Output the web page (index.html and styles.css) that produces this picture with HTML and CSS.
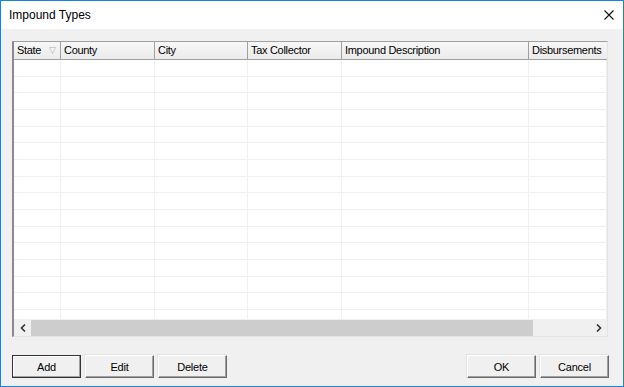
FILE: index.html
```html
<!DOCTYPE html>
<html lang="en">
<head>
    <meta charset="UTF-8">
    <title>Impound Types</title>
    <link rel="stylesheet" href="styles.css">
</head>
<body>
    <div class="window">
        <div class="titlebar">
            <span class="title">Impound Types</span>
            <svg class="close" width="10" height="10" viewBox="0 0 10 10">
                <path d="M0.5 0.5 L9.5 9.5 M9.5 0.5 L0.5 9.5" stroke="#111" stroke-width="1.1" fill="none"/>
            </svg>
        </div>
        <div class="content">
            <div class="grid">
                <div class="grid-head cols">
                    <div class="hcell">State <span class="sort">&#9661;</span></div>
                    <div class="hcell">County</div>
                    <div class="hcell">City</div>
                    <div class="hcell">Tax Collector</div>
                    <div class="hcell">Impound Description</div>
                    <div class="hcell">Disbursements</div>
                </div>
                <div class="grid-body" id="rows"></div>
                <div class="hscroll">
                    <div class="arrow">
                        <svg width="6" height="8" viewBox="0 0 6 8"><path d="M5 0.5 L1.5 4 L5 7.5" stroke="#333" stroke-width="1.6" fill="none"/></svg>
                    </div>
                    <div class="thumb"></div>
                    <div class="track"></div>
                    <div class="arrow">
                        <svg width="6" height="8" viewBox="0 0 6 8"><path d="M1 0.5 L4.5 4 L1 7.5" stroke="#333" stroke-width="1.6" fill="none"/></svg>
                    </div>
                </div>
            </div>
            <div class="buttons">
                <div class="group">
                    <button class="btn default">Add</button>
                    <button class="btn">Edit</button>
                    <button class="btn">Delete</button>
                </div>
                <div class="group">
                    <button class="btn">OK</button>
                    <button class="btn">Cancel</button>
                </div>
            </div>
        </div>
    </div>

    <script>
        // empty rows of the grid
        const rows = document.getElementById('rows');
        for (let i = 0; i < 16; i++) {
            const row = document.createElement('div');
            row.className = 'row cols';
            for (let c = 0; c < 6; c++) {
                const cell = document.createElement('div');
                cell.className = 'cell';
                row.appendChild(cell);
            }
            rows.appendChild(row);
        }
    </script>
</body>
</html>
```

FILE: styles.css
```css
body {
    margin: 0;
    font-family: "Liberation Sans", Arial, sans-serif;
    font-size: 11px;
    color: #000;
}
.window {
    width: 624px;
    height: 387px;
    box-sizing: border-box;
    border: 1px solid #1883d7;
    background-color: #f0f0f0;
    display: flex;
    flex-direction: column;
    overflow: hidden;
}
.titlebar {
    height: 28px;
    background-color: #fff;
    display: flex;
    align-items: center;
    justify-content: space-between;
    padding: 0 9px 0 8px;
    flex-shrink: 0;
}
.title {
    font-size: 12px;
    color: #000;
}
.close {
    margin-top: -1px;
}
.content {
    padding: 12px 0 0 11px;
    display: flex;
    flex-direction: column;
}
.grid {
    width: 596px;
    height: 296px;
    box-sizing: border-box;
    border-top: 1px solid #a0a0a0;
    border-left: 2px solid #8a8a8a;
    border-right: 1px solid #e3e3e3;
    border-bottom: 1px solid #e3e3e3;
    background-color: #fff;
    display: flex;
    flex-direction: column;
    overflow: hidden;
}
.cols {
    display: grid;
    grid-template-columns: 47px 94px 93px 94px 187px 78px;
}
.grid-head {
    height: 17px;
    background: linear-gradient(#f7f7f7, #ebebeb);
    border-bottom: 1px solid #a0a0a0;
    flex-shrink: 0;
}
.hcell {
    border-right: 1px solid #a0a0a0;
    padding-left: 3px;
    line-height: 17px;
    font-size: 11px;
    letter-spacing: -0.3px;
    white-space: nowrap;
    overflow: hidden;
    position: relative;
}
.hcell:last-child {
    border-right: none;
}
.sort {
    position: absolute;
    right: 4px;
    top: 0;
    color: #b0b0b0;
    font-size: 9px;
}
.grid-body {
    flex: 1;
    overflow: hidden;
}
.row {
    height: 16.67px;
    box-sizing: border-box;
    border-bottom: 1px solid #f0f0f0;
}
.cell {
    border-right: 1px solid #f0f0f0;
}
.hscroll {
    height: 16px;
    display: flex;
    background-color: #f0f0f0;
    flex-shrink: 0;
    border-top: 1px solid #f0f0f0;
}
.arrow {
    width: 17px;
    display: flex;
    align-items: center;
    justify-content: center;
}
.thumb {
    width: 502px;
    background-color: #cdcdcd;
}
.track {
    flex: 1;
}
.buttons {
    display: flex;
    justify-content: space-between;
    width: 597px;
    margin-top: 18px;
}
.group {
    display: flex;
    gap: 4px;
}
.btn {
    width: 69px;
    height: 23px;
    box-sizing: border-box;
    font-family: "Liberation Sans", Arial, sans-serif;
    font-size: 11px;
    letter-spacing: -0.2px;
    color: #000;
    background-color: #f0f0f0;
    border-top: 1px solid #fff;
    border-left: 1px solid #fff;
    border-right: 1px solid #696969;
    border-bottom: 1px solid #696969;
    padding: 0;
    box-shadow: inset -1px -1px 0 #a0a0a0, -1px -1px 0 #e3e3e3;
}
.btn.default {
    border: 1px solid #333;
    box-shadow: inset -1px -1px 0 #a0a0a0, inset 1px 1px 0 #fff;
}
```
